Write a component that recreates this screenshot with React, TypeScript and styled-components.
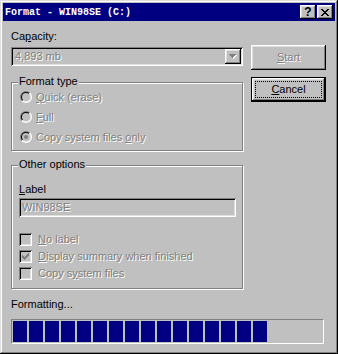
import React from 'react';
import styled, { createGlobalStyle } from 'styled-components';

const Global = createGlobalStyle`
  html, body { margin: 0; padding: 0; background: #c0c0c0; }
  body { font-family: "Liberation Sans", Arial, sans-serif; font-size: 11px; }
  * { box-sizing: border-box; }
`;

const raised = `
  box-shadow: inset -1px -1px #000, inset 1px 1px #fff, inset -2px -2px #808080, inset 2px 2px #dfdfdf;
`;
const sunken = `
  box-shadow: inset 1px 1px #808080, inset -1px -1px #fff, inset 2px 2px #000, inset -2px -2px #dfdfdf;
`;
const disabledText = `
  color: #808080;
  text-shadow: 1px 1px 0 #fff;
`;

const Window = styled.div`
  width: 338px;
  height: 354px;
  background: #c0c0c0;
  padding: 3px;
  box-shadow: inset -1px -1px #000, inset 1px 1px #dfdfdf, inset -2px -2px #808080, inset 2px 2px #fff;
  display: flex;
  flex-direction: column;
  font-family: "Liberation Sans", Arial, sans-serif;
  font-size: 11px;
  color: #000;
`;

const TitleBar = styled.div`
  height: 18px;
  background: #000080;
  display: flex;
  align-items: center;
  padding: 0 2px;
`;

const TitleText = styled.span`
  flex: 1;
  color: #fff;
  font-family: "Liberation Mono", "DejaVu Sans Mono", monospace;
  font-weight: bold;
  font-size: 10px;
  white-space: pre;
`;

const TitleButton = styled.div<{ $gap?: number }>`
  width: 16px;
  height: 14px;
  margin-left: ${(p) => p.$gap ?? 0}px;
  background: #c0c0c0;
  ${raised}
  display: flex;
  align-items: center;
  justify-content: center;
`;

const HelpGlyph = styled.span`
  font-family: "Liberation Sans", Arial, sans-serif;
  font-weight: bold;
  font-size: 12px;
  line-height: 12px;
  color: #000;
  margin-top: -1px;
`;

const Body = styled.div`
  flex: 1;
  display: flex;
  flex-direction: column;
  padding: 0 9px 0 8px;
`;

const TopSection = styled.div`
  display: flex;
  gap: 8px;
`;

const LeftColumn = styled.div`
  width: 232px;
  display: flex;
  flex-direction: column;
`;

const RightColumn = styled.div`
  width: 75px;
  display: flex;
  flex-direction: column;
  gap: 7px;
  padding-top: 24px;
`;

const FieldLabel = styled.div<{ $mt: number }>`
  margin-top: ${(p) => p.$mt}px;
  line-height: 13px;
  height: 13px;
`;

const Key = styled.span`
  text-decoration: underline;
`;

const Combo = styled.div`
  margin-top: 4px;
  height: 19px;
  padding: 2px;
  ${sunken}
  display: flex;
  align-items: center;
`;

const FieldValue = styled.span<{ $pl: number }>`
  flex: 1;
  padding-left: ${(p) => p.$pl}px;
  line-height: 13px;
  ${disabledText}
`;

const DropButton = styled.div`
  width: 16px;
  height: 15px;
  background: #c0c0c0;
  ${raised}
  display: flex;
  align-items: center;
  justify-content: center;
`;

const GroupBox = styled.div<{ $mt: number; $h: number; $pt: number }>`
  position: relative;
  margin-top: ${(p) => p.$mt}px;
  height: ${(p) => p.$h}px;
  border: 1px solid #808080;
  box-shadow: inset 1px 1px #fff, 1px 1px #fff;
  padding: ${(p) => p.$pt}px 6px 0 7px;
  display: flex;
  flex-direction: column;
`;

const Legend = styled.span`
  position: absolute;
  top: -8px;
  left: 6px;
  padding: 0 1px;
  background: #c0c0c0;
  line-height: 13px;
`;

const OptionRow = styled.div<{ $h: number; $gap: number; $indent: number }>`
  height: ${(p) => p.$h}px;
  display: flex;
  align-items: center;
  gap: ${(p) => p.$gap}px;
  padding-left: ${(p) => p.$indent}px;
`;

const OptionText = styled.span`
  line-height: 13px;
  white-space: nowrap;
  ${disabledText}
`;

const RadioOuter = styled.span`
  flex: none;
  width: 12px;
  height: 12px;
  border-radius: 50%;
  background: linear-gradient(135deg, #808080 50%, #fff 50%);
  display: flex;
  align-items: center;
  justify-content: center;
`;

const RadioInner = styled.span`
  width: 10px;
  height: 10px;
  border-radius: 50%;
  background: linear-gradient(135deg, #000 50%, #dfdfdf 50%);
  display: flex;
  align-items: center;
  justify-content: center;
`;

const RadioWell = styled.span<{ $checked?: boolean }>`
  width: 8px;
  height: 8px;
  border-radius: 50%;
  background: #c0c0c0;
  display: flex;
  align-items: center;
  justify-content: center;
  &::after {
    content: '';
    width: 4px;
    height: 4px;
    border-radius: 50%;
    background: #808080;
    display: ${(p) => (p.$checked ? 'block' : 'none')};
  }
`;

const CheckBox = styled.span`
  flex: none;
  width: 13px;
  height: 13px;
  background: #c0c0c0;
  ${sunken}
  display: flex;
  align-items: center;
  justify-content: center;
`;

const TextBox = styled.div`
  margin-top: 2px;
  width: 217px;
  height: 19px;
  padding: 2px;
  ${sunken}
  display: flex;
  align-items: center;
`;

const CheckList = styled.div`
  margin-top: 14px;
  display: flex;
  flex-direction: column;
`;

const PushButton = styled.div<{ $default?: boolean; $disabled?: boolean }>`
  position: relative;
  width: 75px;
  height: 25px;
  background: #c0c0c0;
  display: flex;
  align-items: center;
  justify-content: center;
  line-height: 13px;
  ${(p) =>
    p.$default
      ? `border: 1px solid #000;
         box-shadow: inset -1px -1px #000, inset 1px 1px #fff, inset -2px -2px #808080, inset 2px 2px #dfdfdf;`
      : raised}
  ${(p) => (p.$disabled ? disabledText : 'color: #000;')}
`;

const FocusRing = styled.span`
  position: absolute;
  inset: 3px;
  border: 1px dotted #000;
  pointer-events: none;
`;

const StatusText = styled.div`
  margin-top: 9px;
  line-height: 13px;
  height: 13px;
`;

const ProgressTrack = styled.div`
  margin-top: 8px;
  width: 313px;
  height: 25px;
  padding: 1px;
  border: 1px solid;
  border-color: #808080 #fff #fff #808080;
  display: flex;
  gap: 2px;
`;

const ProgressBlock = styled.span`
  width: 14px;
  height: 100%;
  background: #000080;
  flex: none;
`;

const CloseIcon = () => (
  <svg width="8" height="7" viewBox="0 0 8 7" shapeRendering="crispEdges">
    <g fill="#000">
      <rect x="0" y="0" width="2" height="1" />
      <rect x="6" y="0" width="2" height="1" />
      <rect x="1" y="1" width="2" height="1" />
      <rect x="5" y="1" width="2" height="1" />
      <rect x="2" y="2" width="4" height="1" />
      <rect x="3" y="3" width="2" height="1" />
      <rect x="2" y="4" width="4" height="1" />
      <rect x="1" y="5" width="2" height="1" />
      <rect x="5" y="5" width="2" height="1" />
      <rect x="0" y="6" width="2" height="1" />
      <rect x="6" y="6" width="2" height="1" />
    </g>
  </svg>
);

const ArrowDown = () => (
  <svg width="8" height="5" viewBox="0 0 8 5" shapeRendering="crispEdges">
    <g fill="#fff" transform="translate(1 1)">
      <rect x="0" y="0" width="7" height="1" />
      <rect x="1" y="1" width="5" height="1" />
      <rect x="2" y="2" width="3" height="1" />
      <rect x="3" y="3" width="1" height="1" />
    </g>
    <g fill="#808080">
      <rect x="0" y="0" width="7" height="1" />
      <rect x="1" y="1" width="5" height="1" />
      <rect x="2" y="2" width="3" height="1" />
      <rect x="3" y="3" width="1" height="1" />
    </g>
  </svg>
);

const CheckMark = () => (
  <svg width="7" height="7" viewBox="0 0 7 7" shapeRendering="crispEdges">
    <g fill="#808080">
      <rect x="0" y="2" width="1" height="3" />
      <rect x="1" y="3" width="1" height="3" />
      <rect x="2" y="4" width="1" height="3" />
      <rect x="3" y="3" width="1" height="3" />
      <rect x="4" y="2" width="1" height="3" />
      <rect x="5" y="1" width="1" height="3" />
      <rect x="6" y="0" width="1" height="3" />
    </g>
  </svg>
);

const Radio = ({ checked }: { checked?: boolean }) => (
  <RadioOuter>
    <RadioInner>
      <RadioWell $checked={checked} />
    </RadioInner>
  </RadioOuter>
);

const radios: { pre: string; key: string; post: string; checked?: boolean }[] = [
  { pre: '', key: 'Q', post: 'uick (erase)' },
  { pre: '', key: 'F', post: 'ull' },
  { pre: 'Copy system files ', key: 'o', post: 'nly', checked: true },
];

const checks: { pre: string; key: string; post: string; checked?: boolean }[] = [
  { pre: '', key: 'N', post: 'o label' },
  { pre: '', key: 'D', post: 'isplay summary when finished', checked: true },
  { pre: 'Copy s', key: 'y', post: 'stem files' },
];

const BLOCKS = 16;

export default function App() {
  return (
    <>
      <Global />
      <Window>
        <TitleBar>
          <TitleText>Format - WIN98SE (C:)</TitleText>
          <TitleButton>
            <HelpGlyph>?</HelpGlyph>
          </TitleButton>
          <TitleButton $gap={1}>
            <CloseIcon />
          </TitleButton>
        </TitleBar>
        <Body>
          <TopSection>
            <LeftColumn>
              <FieldLabel $mt={9}>
                Ca<Key>p</Key>acity:
              </FieldLabel>
              <Combo>
                <FieldValue $pl={2}>4,893 mb</FieldValue>
                <DropButton>
                  <ArrowDown />
                </DropButton>
              </Combo>
              <GroupBox $mt={16} $h={69} $pt={4}>
                <Legend>Format type</Legend>
                {radios.map((r) => (
                  <OptionRow key={r.key} $h={20} $gap={4} $indent={1}>
                    <Radio checked={r.checked} />
                    <OptionText>
                      {r.pre}
                      <Key>{r.key}</Key>
                      {r.post}
                    </OptionText>
                  </OptionRow>
                ))}
              </GroupBox>
              <GroupBox $mt={14} $h={124} $pt={17}>
                <Legend>Other options</Legend>
                <FieldLabel $mt={0}>
                  <Key>L</Key>abel
                </FieldLabel>
                <TextBox>
                  <FieldValue $pl={1}>WIN98SE</FieldValue>
                </TextBox>
                <CheckList>
                  {checks.map((c) => (
                    <OptionRow key={c.key} $h={17} $gap={6} $indent={0}>
                      <CheckBox>{c.checked && <CheckMark />}</CheckBox>
                      <OptionText>
                        {c.pre}
                        <Key>{c.key}</Key>
                        {c.post}
                      </OptionText>
                    </OptionRow>
                  ))}
                </CheckList>
              </GroupBox>
            </LeftColumn>
            <RightColumn>
              <PushButton $disabled>
                <span>
                  <Key>S</Key>tart
                </span>
              </PushButton>
              <PushButton $default>
                <span>
                  <Key>C</Key>ancel
                </span>
                <FocusRing />
              </PushButton>
            </RightColumn>
          </TopSection>
          <StatusText>Formatting...</StatusText>
          <ProgressTrack>
            {Array.from({ length: BLOCKS }).map((_, i) => (
              <ProgressBlock key={i} />
            ))}
          </ProgressTrack>
        </Body>
      </Window>
    </>
  );
}
